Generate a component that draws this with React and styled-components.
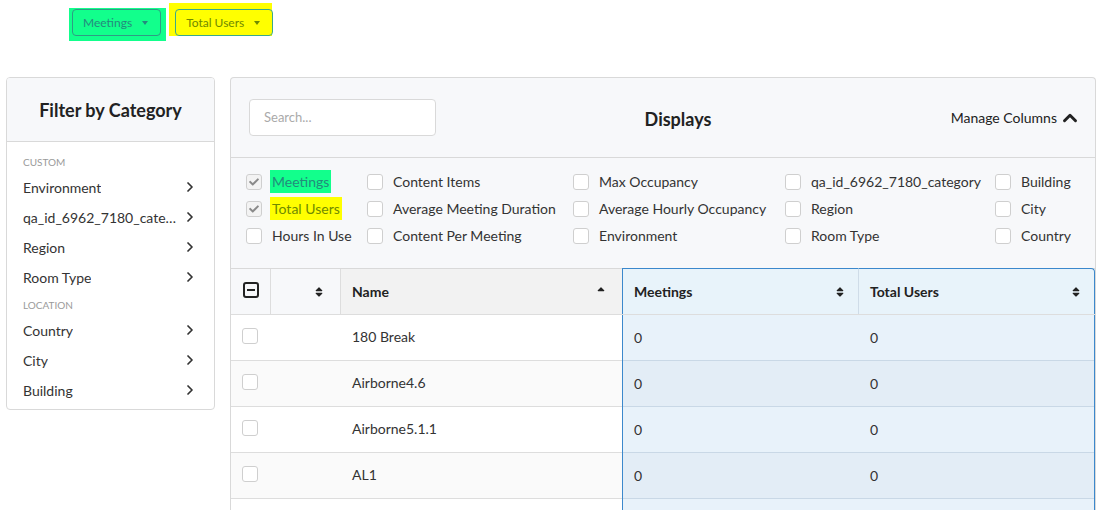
import React from 'react';
import styled, { createGlobalStyle } from 'styled-components';
import { ChevronRight, ChevronUp } from 'lucide-react';
import { FaSort, FaSortUp, FaCheck } from 'react-icons/fa';

const GlobalStyle = createGlobalStyle`
  body {
    margin: 0;
    background: #fff;
    font-family: Lato, "Noto Sans", sans-serif;
    color: #333;
  }
`;

const Page = styled.div`
  padding: 0 7px 0 6px;
`;

const TopBar = styled.div`
  display: flex;
  align-items: flex-start;
  gap: 3px;
  height: 77px;
  padding-left: 63px;
`;

const Highlight = styled.div`
  background: ${(p) => p.$bg};
  padding: ${(p) => p.$pad};
  margin-top: ${(p) => p.$top}px;
  display: flex;
`;

const ValueButton = styled.button`
  display: flex;
  align-items: center;
  gap: 10px;
  height: 27px;
  padding: 0 12px 0 10px;
  border: 1px solid ${(p) => p.$border};
  border-radius: 4px;
  background: transparent;
  color: ${(p) => p.$color};
  font-family: Lato, sans-serif;
  font-size: 12px;
  cursor: pointer;
`;

const Caret = styled.span`
  width: 0;
  height: 0;
  border-left: 3px solid transparent;
  border-right: 3px solid transparent;
  border-top: 4px solid currentColor;
`;

const Content = styled.div`
  display: flex;
  align-items: flex-start;
  gap: 15px;
`;

const Sidebar = styled.aside`
  width: 209px;
  box-sizing: border-box;
  border: 1px solid #d9d9d9;
  border-radius: 4px;
  overflow: hidden;
`;

const SidebarHead = styled.div`
  height: 63px;
  display: flex;
  align-items: center;
  justify-content: center;
  background: #f7f8fa;
  border-bottom: 1px solid #d9d9d9;
  font-size: 18px;
  font-weight: 700;
  color: #222;
`;

const SidebarBody = styled.div`
  padding: 12px 16px 4px 16px;
`;

const GroupLabel = styled.div`
  font-size: 10px;
  line-height: 16px;
  color: #9a9a9a;
  text-transform: uppercase;
  margin: ${(p) => (p.$first ? '0 0 2px' : '5px 0 2px')};
`;

const FilterItem = styled.div`
  display: flex;
  align-items: center;
  justify-content: space-between;
  gap: 2px;
  height: 30px;
  font-size: 14px;
  color: #333;
  cursor: pointer;
  span {
    white-space: nowrap;
    overflow: hidden;
    text-overflow: ellipsis;
  }
  svg {
    flex-shrink: 0;
    color: #333;
  }
`;

const Panel = styled.section`
  flex: 1;
  box-sizing: border-box;
  border: 1px solid #d9d9d9;
  border-bottom: none;
  border-radius: 4px 4px 0 0;
  background: #f7f8fa;
  overflow: hidden;
`;

const PanelHead = styled.div`
  height: 79px;
  display: grid;
  grid-template-columns: 1fr auto 1fr;
  align-items: center;
  padding: 0 14px 0 18px;
  border-bottom: 1px solid #d9d9d9;
`;

const Search = styled.input`
  width: 187px;
  height: 37px;
  box-sizing: border-box;
  border: 1px solid #d9d9d9;
  border-radius: 4px;
  padding: 0 14px 2px;
  font-family: Lato, sans-serif;
  font-size: 13px;
  background: #fff;
  outline: none;
  &::placeholder {
    color: #aaa;
  }
`;

const Title = styled.h2`
  margin: 2px 0 0;
  padding-left: 26px;
  font-size: 18px;
  font-weight: 700;
  color: #222;
`;

const Manage = styled.button`
  justify-self: end;
  display: flex;
  align-items: center;
  gap: 2px;
  border: none;
  background: none;
  padding: 0;
  font-family: Lato, sans-serif;
  font-size: 14px;
  color: #222;
  cursor: pointer;
`;

const Columns = styled.div`
  display: grid;
  grid-template-columns: 121px 206px 212px 210px 1fr;
  grid-auto-rows: 27px;
  padding: 10px 0 19px 15px;
`;

const Option = styled.label`
  display: flex;
  align-items: center;
  gap: 10px;
  font-size: 14px;
  color: #333;
  white-space: nowrap;
`;

const Box = styled.span`
  width: 16px;
  height: 16px;
  box-sizing: border-box;
  border: 1px solid #cfcfcf;
  border-radius: 3px;
  background: ${(p) => (p.$checked ? '#f3f3f3' : '#fff')};
  display: flex;
  align-items: center;
  justify-content: center;
  color: #8a8a8a;
  flex-shrink: 0;
`;

const Marked = styled.span`
  background: ${(p) => p.$bg || 'transparent'};
  color: ${(p) => p.$color || 'inherit'};
  padding: 3px 2px;
  margin-left: -2px;
`;

const Table = styled.div`
  background: #fff;
  border-top: 1px solid #d9d9d9;
`;

const Row = styled.div`
  display: grid;
  grid-template-columns: 40px 70px 281px 237px 236px;
  height: 45px;
  border-bottom: 1px solid #ddd;
  background: ${(p) => (p.$head ? '#f7f8fa' : p.$alt ? '#fafafa' : '#fff')};
`;

const Cell = styled.div`
  display: flex;
  align-items: center;
  justify-content: ${(p) => p.$justify || 'flex-start'};
  padding: 0 ${(p) => p.$pr ?? 12}px ${(p) => (p.$head ? 0 : 2)}px ${(p) => p.$pl ?? 11}px;
  font-size: 14px;
  font-weight: ${(p) => (p.$head ? 700 : 400)};
  color: ${(p) => (p.$head ? '#222' : '#333')};
  background: ${(p) => p.$bg || 'transparent'};
  border-right: ${(p) => (p.$divide ? '1px solid #ddd' : 'none')};
  svg {
    color: #222;
  }
`;

const BlueCell = styled(Cell)`
  background: ${(p) => (p.$head ? '#e8f3fa' : p.$alt ? '#e3edf6' : '#e8f2fa')};
  border-left: ${(p) => (p.$first ? '1px solid #3b88cc' : 'none')};
  border-right: ${(p) =>
    p.$last ? '1px solid #3b88cc' : p.$head ? '1px solid #cfdce8' : 'none'};
  border-top: ${(p) => (p.$head ? '1px solid #3b88cc' : 'none')};
  border-top-right-radius: ${(p) => (p.$head && p.$last ? '4px' : '0')};
  margin: ${(p) => (p.$head ? '-1px 0 0' : '0')};
  margin-bottom: ${(p) => (p.$head ? '0' : '-1px')};
  box-shadow: ${(p) => (p.$head ? 'none' : 'inset 0 -1px 0 #c9d8e6')};
  justify-content: space-between;
`;

const RowBox = styled(Box)`
  margin-top: -2px;
`;

const MinusBox = styled.span`
  width: 16px;
  height: 16px;
  box-sizing: border-box;
  border: 2px solid #222;
  border-radius: 3px;
  display: flex;
  align-items: center;
  justify-content: center;
  margin-top: -4px;
  &::after {
    content: '';
    width: 8px;
    height: 2px;
    background: #222;
  }
`;

const customFilters = ['Environment', 'qa_id_6962_7180_category', 'Region', 'Room Type'];
const locationFilters = ['Country', 'City', 'Building'];

const options = [
  ['Meetings', 'Content Items', 'Max Occupancy', 'qa_id_6962_7180_category', 'Building'],
  ['Total Users', 'Average Meeting Duration', 'Average Hourly Occupancy', 'Region', 'City'],
  ['Hours In Use', 'Content Per Meeting', 'Environment', 'Room Type', 'Country'],
];

const marks = {
  Meetings: { bg: '#12ff8c', color: '#238b7c' },
  'Total Users': { bg: '#ffff00', color: '#6f8a00' },
};

const rows = ['180 Break', 'Airborne4.6', 'Airborne5.1.1', 'AL1', ''];

function Filter({ name }) {
  return (
    <FilterItem>
      <span>{name}</span>
      <ChevronRight size={16} strokeWidth={2.6} />
    </FilterItem>
  );
}

export default function App() {
  return (
    <Page>
      <GlobalStyle />
      <TopBar>
        <Highlight $bg="#12ff8c" $pad="1px 5px 5px 3px" $top={8}>
          <ValueButton $border="#2f9c84" $color="#258a7e">
            Meetings <Caret />
          </ValueButton>
        </Highlight>
        <Highlight $bg="#ffff00" $pad="6px 0 0 6px" $top={3}>
          <ValueButton $border="#3aa98a" $color="#6f8a00" style={{ marginRight: -1 }}>
            Total Users <Caret />
          </ValueButton>
        </Highlight>
      </TopBar>

      <Content>
        <Sidebar>
          <SidebarHead>Filter by Category</SidebarHead>
          <SidebarBody>
            <GroupLabel $first>Custom</GroupLabel>
            {customFilters.map((f) => (
              <Filter key={f} name={f} />
            ))}
            <GroupLabel>Location</GroupLabel>
            {locationFilters.map((f) => (
              <Filter key={f} name={f} />
            ))}
          </SidebarBody>
        </Sidebar>

        <Panel>
          <PanelHead>
            <Search placeholder="Search..." />
            <Title>Displays</Title>
            <Manage>
              Manage Columns <ChevronUp size={22} strokeWidth={3.2} />
            </Manage>
          </PanelHead>

          <Columns>
            {options.flat().map((name, i) => {
              const checked = i === 0 || i === 5;
              const mark = checked ? marks[name] : null;
              return (
                <Option key={name + i}>
                  <Box $checked={checked}>{checked && <FaCheck size={10} />}</Box>
                  {mark ? (
                    <Marked $bg={mark.bg} $color={mark.color}>
                      {name}
                    </Marked>
                  ) : (
                    name
                  )}
                </Option>
              );
            })}
          </Columns>

          <Table>
            <Row $head>
              <Cell $head $divide $justify="center" $pl={0} $pr={0}>
                <MinusBox />
              </Cell>
              <Cell $head $divide $justify="flex-end" $pr={15}>
                <FaSort size={12} />
              </Cell>
              <Cell $head $bg="#f2f2f2" $justify="space-between" $pr={15}>
                Name
                <FaSortUp size={12} />
              </Cell>
              <BlueCell $head $first>
                Meetings
                <FaSort size={12} />
              </BlueCell>
              <BlueCell $head $last>
                Total Users
                <FaSort size={12} />
              </BlueCell>
            </Row>
            {rows.map((name, i) => (
              <Row key={i} $alt={i % 2 === 1}>
                <Cell $justify="center" $pl={0} $pr={2}>
                  {name && <RowBox />}
                </Cell>
                <Cell />
                <Cell>{name}</Cell>
                <BlueCell $first $alt={i % 2 === 1}>
                  {name && '0'}
                </BlueCell>
                <BlueCell $last $alt={i % 2 === 1}>
                  {name && '0'}
                </BlueCell>
              </Row>
            ))}
          </Table>
        </Panel>
      </Content>
    </Page>
  );
}
